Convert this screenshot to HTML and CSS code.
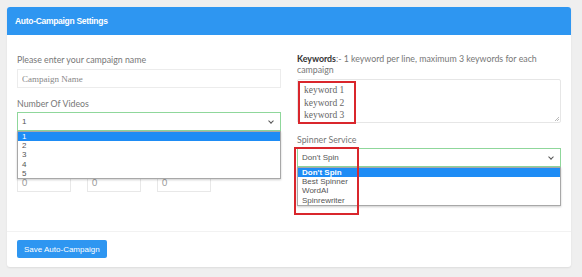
FILE: index.html
```html
<!DOCTYPE html>
<html>
<head>
	<meta charset="utf-8"/>
	<title>Auto-Campaign Settings</title>
	<link rel="stylesheet" href="styles.css">
</head>
<body>
<div class="card">
	<div class="card-head">Auto-Campaign Settings</div>
	<div class="card-body">
		<div class="col">
			<label class="lbl">Please enter your campaign name</label>
			<input type="text" class="field" placeholder="Campaign Name">
			<label class="lbl lbl2">Number Of Videos</label>
			<div class="sel-wrap">
				<div class="sel">1<span class="chev"></span></div>
				<ul class="popup popup-left">
					<li class="on">1</li>
					<li>2</li>
					<li>3</li>
					<li>4</li>
					<li>5</li>
				</ul>
			</div>
			<div class="smalls">
				<div class="small">0</div>
				<div class="small">0</div>
				<div class="small">0</div>
			</div>
		</div>
		<div class="col">
			<label class="lbl lbl-kw"><b>Keywords</b>:- 1 keyword per line, maximum 3 keywords for each campaign</label>
			<div class="kw">
				<div class="kw-text">keyword 1<br>keyword 2<br>keyword 3</div>
				<span class="mark mark-kw"></span>
			</div>
			<label class="lbl lbl3">Spinner Service</label>
			<div class="sel-wrap">
				<div class="sel">Don't Spin<span class="chev"></span></div>
				<ul class="popup popup-right">
					<li class="on">Don't Spin</li>
					<li>Best Spinner</li>
					<li>WordAI</li>
					<li>Spinrewriter</li>
				</ul>
				<span class="mark mark-spin"></span>
			</div>
		</div>
	</div>
	<div class="card-foot">
		<button class="save">Save Auto-Campaign</button>
	</div>
</div>
</body>
</html>
```

FILE: styles.css
```css
body{
	margin: 0;
	padding: 7px 11px 10px 7px;
	background: #efefef;
	font-family: Lato, "Open Sans", sans-serif;
	color: #666;
}
.card{
	background: #fff;
	border-radius: 3px;
	box-shadow: 0 1px 2px rgba(0,0,0,0.08);
}
.card-head{
	height: 28px;
	line-height: 28px;
	padding: 0 8px;
	background: #2e96f1;
	color: #fff;
	font-family: "Liberation Sans", Arial, sans-serif;
	font-size: 8.5px;
	font-weight: bold;
	letter-spacing: -0.3px;
	border-radius: 3px 3px 0 0;
}
.card-body{
	display: grid;
	grid-template-columns: 264px 264px;
	gap: 16px;
	padding: 19px 10px 39px 10px;
}
.col{
	display: flex;
	flex-direction: column;
}
.lbl{
	font-size: 8.8px;
	line-height: 11px;
	color: #777;
	margin-bottom: 4px;
}
.lbl b{
	color: #333;
	font-weight: bold;
}
.lbl-kw{
	line-height: 10.5px;
	margin-bottom: 4px;
}
.lbl2{
	margin-top: 10px;
	margin-bottom: 3px;
}
.lbl3{
	margin-top: 11px;
	margin-bottom: 3px;
}
.field{
	box-sizing: border-box;
	height: 19px;
	border: 1px solid #ececec;
	padding: 0 4px;
	font-family: "Liberation Serif", serif;
	font-size: 9px;
	outline: none;
}
.field::placeholder{
	color: #888;
}
.sel-wrap{
	position: relative;
}
.sel{
	box-sizing: border-box;
	height: 19px;
	line-height: 17px;
	border: 1px solid #8fd79b;
	padding: 0 4px;
	font-family: "Liberation Sans", Arial, sans-serif;
	font-size: 8px;
	color: #555;
	position: relative;
}
.chev{
	position: absolute;
	right: 7px;
	top: 6px;
	width: 3px;
	height: 3px;
	border-right: 1px solid #555;
	border-bottom: 1px solid #555;
	transform: rotate(45deg);
}
.popup{
	position: absolute;
	left: 0;
	right: 0;
	top: 19px;
	margin: 0;
	padding: 0;
	list-style: none;
	background: #fff;
	border: 1px solid #a8a8a8;
	box-shadow: 0 1px 2px rgba(0,0,0,0.2);
	font-family: "Liberation Sans", Arial, sans-serif;
	font-size: 8px;
	color: #555;
	z-index: 2;
}
.popup li{
	height: 9.2px;
	line-height: 9.2px;
	padding: 0 4px;
}
.popup li.on{
	background: #1e8cf5;
	color: #fff;
}
.popup-right li.on{
	font-weight: bold;
}
.smalls{
	display: flex;
	gap: 16px;
	margin-top: 43px;
}
.small{
	box-sizing: border-box;
	width: 54px;
	height: 18px;
	border: 1px solid #e8e8e8;
	padding: 3px 4px 0 4px;
	font-size: 9px;
	line-height: 10px;
	color: #999;
}
.kw{
	position: relative;
	box-sizing: border-box;
	height: 44px;
	border: 1px solid #e6e6e6;
	border-radius: 2px;
}
.kw::after{
	content: "";
	position: absolute;
	right: 1px;
	bottom: 1px;
	width: 4px;
	height: 4px;
	background: linear-gradient(135deg, transparent 45%, #bbb 50%, transparent 60%, transparent 70%, #bbb 75%, transparent 85%);
}
.kw-text{
	padding: 4px 6px;
	font-family: "Liberation Serif", serif;
	font-size: 9.5px;
	line-height: 12.5px;
	color: #666;
}
.mark{
	position: absolute;
	border: 2px solid #d9262c;
	z-index: 3;
}
.mark-kw{
	left: 0;
	top: 1px;
	width: 54px;
	height: 39px;
}
.mark-spin{
	left: -3px;
	top: -1px;
	width: 61px;
	height: 64px;
}
.card-foot{
	border-top: 1px solid #f2f2f2;
	padding: 8px 10px 9px 10px;
}
.save{
	display: block;
	height: 18px;
	padding: 0 7px;
	border: none;
	border-radius: 2px;
	background: #2e96f1;
	color: #fff;
	font-family: "Liberation Sans", Arial, sans-serif;
	font-size: 8px;
}
```
